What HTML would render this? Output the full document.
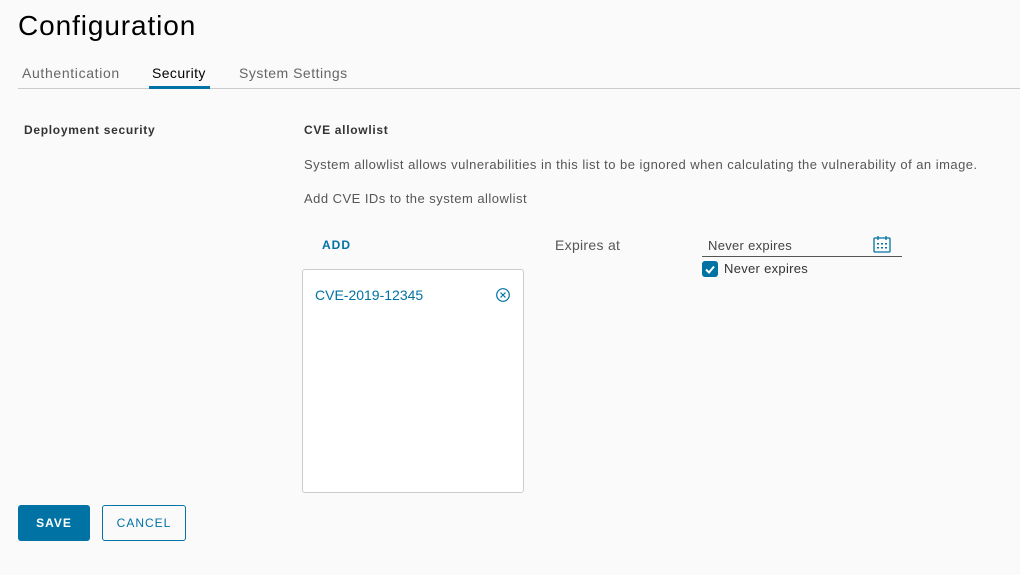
<!DOCTYPE html>
<html><head><style>
body{margin:0;width:1020px;height:575px;background:#fafafa;font-family:"Liberation Sans",sans-serif;position:relative;overflow:hidden;color:#565656}
.a{position:absolute;white-space:nowrap}
</style></head><body>
<div class="a" style="left:18px;top:10px;font-size:28px;color:#000;letter-spacing:0.9px">Configuration</div>
<div class="a" style="left:22px;top:65px;font-size:14px;color:#666;letter-spacing:0.65px">Authentication</div>
<div class="a" style="left:152px;top:65px;font-size:14px;color:#000;letter-spacing:0.4px">Security</div>
<div class="a" style="left:239px;top:65px;font-size:14px;color:#666;letter-spacing:0.5px">System Settings</div>
<div class="a" style="left:18px;top:88px;width:1002px;height:1px;background:#ccc"></div>
<div class="a" style="left:149px;top:86px;width:61px;height:3px;background:#0072a3"></div>
<div class="a" style="left:24px;top:123px;font-size:12px;font-weight:bold;color:#333;letter-spacing:0.7px">Deployment security</div>
<div class="a" style="left:304px;top:123px;font-size:12px;font-weight:bold;color:#333;letter-spacing:0.7px">CVE allowlist</div>
<div class="a" style="left:304px;top:157px;font-size:13px;letter-spacing:0.47px">System allowlist allows vulnerabilities in this list to be ignored when calculating the vulnerability of an image.</div>
<div class="a" style="left:304px;top:191px;font-size:13px;letter-spacing:0.47px">Add CVE IDs to the system allowlist</div>
<div class="a" style="left:322px;top:238px;font-size:12px;font-weight:bold;color:#0072a3;letter-spacing:1px">ADD</div>
<div class="a" style="left:555px;top:237px;font-size:14px;letter-spacing:0.3px">Expires at</div>
<div class="a" style="left:708px;top:238px;font-size:13px;color:#444;letter-spacing:0.3px">Never expires</div>
<svg class="a" style="left:872px;top:235px" width="20" height="18" viewBox="0 0 20 18"><rect x="2" y="3" width="16" height="14" rx="1" fill="none" stroke="#0072a3" stroke-width="1.3"/><path d="M6 1v4M14 1v4" stroke="#0072a3" stroke-width="1.3"/><g fill="#0072a3"><rect x="5" y="8" width="2" height="1.5"/><rect x="9" y="8" width="2" height="1.5"/><rect x="13" y="8" width="2" height="1.5"/><rect x="5" y="12" width="2" height="1.5"/><rect x="9" y="12" width="2" height="1.5"/><rect x="13" y="12" width="2" height="1.5"/></g></svg>
<div class="a" style="left:702px;top:256px;width:200px;height:1px;background:#555"></div>
<div class="a" style="left:702px;top:261px;width:16px;height:16px;background:#0072a3;border-radius:3px"></div>
<svg class="a" style="left:702px;top:261px" width="16" height="16"><path d="M4 8.5l3 3 5-6" fill="none" stroke="#fff" stroke-width="2"/></svg>
<div class="a" style="left:724px;top:261px;font-size:13px;color:#333;letter-spacing:0.3px">Never expires</div>
<div class="a" style="left:302px;top:269px;width:220px;height:222px;border:1px solid #ccc;border-radius:3px;background:#fff"></div>
<div class="a" style="left:315px;top:287px;font-size:14px;color:#0072a3">CVE-2019-12345</div>
<svg class="a" style="left:495px;top:287px" width="16" height="16"><circle cx="8" cy="8" r="6.3" fill="none" stroke="#0072a3" stroke-width="1.2"/><path d="M5.5 5.5l5 5M10.5 5.5l-5 5" stroke="#0072a3" stroke-width="1.2"/></svg>
<div class="a" style="left:18px;top:505px;width:72px;height:36px;background:#0072a3;border-radius:3px;color:#fff;font-size:12px;font-weight:bold;letter-spacing:1px;text-align:center;line-height:36px">SAVE</div>
<div class="a" style="left:102px;top:505px;width:82px;height:34px;border:1px solid #0072a3;border-radius:3px;color:#0072a3;font-size:12px;letter-spacing:1px;text-align:center;line-height:34px">CANCEL</div>
</body></html>
